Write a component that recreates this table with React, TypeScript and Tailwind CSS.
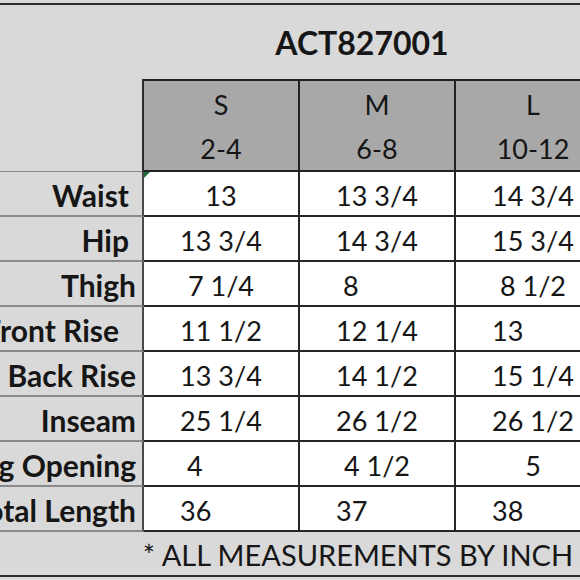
import React from "react";

type Cell = { v: string; a: "c" | "l" | "ls" };
const rows: { label: string; pr: string; cells: Cell[] }[] = [
  { label: "Waist", pr: "pr-[13px]", cells: [{ v: "13", a: "c" }, { v: "13 3/4", a: "c" }, { v: "14 3/4", a: "c" }] },
  { label: "Hip", pr: "pr-[13px]", cells: [{ v: "13 3/4", a: "c" }, { v: "14 3/4", a: "c" }, { v: "15 3/4", a: "c" }] },
  { label: "Thigh", pr: "pr-[6px]", cells: [{ v: "7 1/4", a: "c" }, { v: "8", a: "ls" }, { v: "8 1/2", a: "c" }] },
  { label: "Front Rise", pr: "pr-[23px]", cells: [{ v: "11 1/2", a: "c" }, { v: "12 1/4", a: "c" }, { v: "13", a: "l" }] },
  { label: "Back Rise", pr: "pr-[6px]", cells: [{ v: "13 3/4", a: "c" }, { v: "14 1/2", a: "c" }, { v: "15 1/4", a: "c" }] },
  { label: "Inseam", pr: "pr-[6px]", cells: [{ v: "25 1/4", a: "c" }, { v: "26 1/2", a: "c" }, { v: "26 1/2", a: "c" }] },
  { label: "Leg Opening", pr: "pr-[6px]", cells: [{ v: "4", a: "ls" }, { v: "4 1/2", a: "c" }, { v: "5", a: "c" }] },
  { label: "Total Length", pr: "pr-[6px]", cells: [{ v: "36", a: "l" }, { v: "37", a: "l" }, { v: "38", a: "l" }] },
];

const align = (a: Cell["a"]) =>
  a === "c" ? "justify-center" : a === "l" ? "justify-start pl-[36px]" : "justify-start pl-[43px]";

export default function App() {
  return (
    <div
      className="w-[580px] h-[580px] overflow-hidden bg-[#d9d9d9] text-[#161616] relative"
      style={{ fontFamily: "Lato, 'Open Sans', sans-serif" }}
    >
      <div className="w-[612px]">
        <div className="h-[3px]" />
        <div className="h-[2px] bg-[#2a2a2a]" />
        <div className="h-[74px] w-[580px] pl-[144px] pt-[2px] flex items-center justify-center">
          <span className="text-[32px] font-bold leading-none">ACT827001</span>
        </div>
        {/* header */}
        <div className="grid grid-cols-[144px_156px_156px_156px] h-[93px]">
          <div className="bg-[#d9d9d9] border-r-2 border-r-[#2a2a2a] border-b-2 border-b-[#8a8a8a]" />
          {[
            ["S", "2-4"],
            ["M", "6-8"],
            ["L", "10-12"],
          ].map(([a, b]) => (
            <div
              key={a}
              className="bg-[#a8a8a8] border-t-2 border-b-[3px] border-r-2 border-[#222] flex flex-col pt-[1px] text-[27px] leading-none"
            >
              <div className="h-[44px] flex items-center justify-center">{a}</div>
              <div className="h-[44px] flex items-center justify-center">{b}</div>
            </div>
          ))}
        </div>
        {/* body */}
        {rows.map((r, i) => (
          <div key={r.label} className="grid grid-cols-[144px_156px_156px_156px] h-[45px] relative">
            <div
              className={`bg-[#d9d9d9] border-r-2 border-r-[#4a4a4a] border-b-2 border-b-[#8a8a8a] flex items-center justify-end whitespace-nowrap font-bold text-[30px] leading-none pt-[3px] ${r.pr}`}
            >
              {r.label}
            </div>
            {r.cells.map((c, j) => (
              <div
                key={j}
                className={`bg-white border-r-2 border-b-2 border-[#262626] flex items-center whitespace-nowrap text-[27px] leading-none pt-[3px] ${align(c.a)}`}
              >
                {c.v}
              </div>
            ))}
            {i === 0 && (
              <svg className="absolute left-[144px] top-0" width="6" height="6" viewBox="0 0 6 6">
                <polygon points="0,0 6,0 0,6" fill="#1f6b3a" />
              </svg>
            )}
          </div>
        ))}
        {/* footer */}
        <div className="h-[45px] border-b-2 border-[#2a2a2a] bg-[#d9d9d9]">
          <div className="w-[580px] h-full pl-[136px] flex items-center justify-center whitespace-nowrap text-[29px] leading-none pt-[1px]">
            * ALL MEASUREMENTS BY INCH
          </div>
        </div>
      </div>
    </div>
  );
}
